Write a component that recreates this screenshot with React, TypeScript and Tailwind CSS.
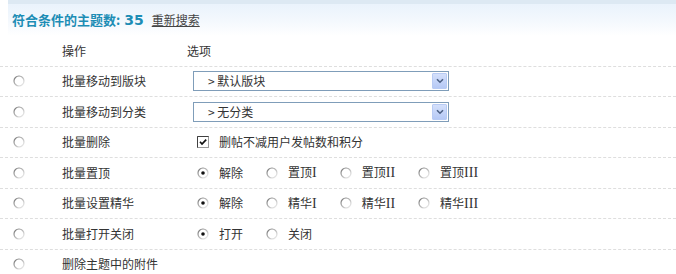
import React from 'react';

// --- small XP-style form widgets ---
const Radio: React.FC<{ checked?: boolean }> = ({ checked }) => (
  <svg width="12" height="12" viewBox="0 0 12 12" className="shrink-0">
    <defs>
      <linearGradient id="rb" x1="0" y1="0" x2="1" y2="1">
        <stop offset="0" stopColor="#707070" />
        <stop offset="0.5" stopColor="#b8b8b8" />
        <stop offset="1" stopColor="#f4f4f4" />
      </linearGradient>
    </defs>
    <circle cx="6" cy="6" r="5" fill="#ffffff" stroke="url(#rb)" strokeWidth="1.2" />
    {checked && <circle cx="6" cy="6" r="1.8" fill="#111111" />}
  </svg>
);

const Checkbox: React.FC = () => (
  <svg width="12" height="12" viewBox="0 0 12 12" className="shrink-0">
    <rect x="0.5" y="0.5" width="11" height="11" fill="#ffffff" stroke="#9a9a9a" />
    <path d="M0.5 11.5 V0.5 H11.5" fill="none" stroke="#404040" />
    <path d="M3 5.8 L5 8 L9.2 3.6" fill="none" stroke="#111111" strokeWidth="1.7" />
  </svg>
);

const FakeSelect: React.FC<{ text: string }> = ({ text }) => (
  <div className="ml-[6px] flex h-[20px] w-[256px] items-center border border-[#7f9db9] bg-white pr-px">
    <span className="flex-1 pl-[14px] text-[12px] text-[#333]">{text}</span>
    <div className="flex h-[16px] w-[15px] items-center justify-center rounded-[1px] border border-[#b8cbf4] bg-gradient-to-b from-[#d4e0fb] to-[#b6c9f5]">
      <svg width="8" height="6" viewBox="0 0 8 6">
        <path d="M1 1.2 L4 4.2 L7 1.2" fill="none" stroke="#4d6185" strokeWidth="1.6" />
      </svg>
    </div>
  </div>
);

// serif roman numerals, like the original page font
const Num: React.FC<{ n: string }> = ({ n }) => <span className="font-['Liberation_Serif',serif] text-[14px]">{n}</span>;

const RadioGroup: React.FC<{ items: React.ReactNode[] }> = ({ items }) => (
  <div className="ml-[10px] flex items-center">
    {items.map((it, i) => (
      <label key={i} className="mr-[23px] flex items-center">
        <Radio checked={i === 0} />
        <span className="ml-[10px] text-[12px] text-[#333]">{it}</span>
      </label>
    ))}
  </div>
);

const rows: { label: string; option: React.ReactNode }[] = [
  { label: '批量移动到版块', option: <FakeSelect text="> 默认版块" /> },
  { label: '批量移动到分类', option: <FakeSelect text="> 无分类" /> },
  {
    label: '批量删除',
    option: (
      <div className="ml-[10px] flex items-center">
        <Checkbox />
        <span className="ml-[10px] text-[12px] text-[#333]">删帖不减用户发帖数和积分</span>
      </div>
    ),
  },
  {
    label: '批量置顶',
    option: <RadioGroup items={['解除', <>置顶<Num n="I" /></>, <>置顶<Num n="II" /></>, <>置顶<Num n="III" /></>]} />,
  },
  {
    label: '批量设置精华',
    option: <RadioGroup items={['解除', <>精华<Num n="I" /></>, <>精华<Num n="II" /></>, <>精华<Num n="III" /></>]} />,
  },
  { label: '批量打开关闭', option: <RadioGroup items={['打开', '关闭']} /> },
  { label: '删除主题中的附件', option: null },
];

const App: React.FC = () => {
  return (
    <div className="h-[274px] w-[676px] overflow-hidden bg-white font-['Noto_Sans_CJK_SC',sans-serif] text-[12px] text-[#333]">
      {/* result header */}
      <div className="ml-[8px] border-t-[4px] border-[#dde9f3] bg-gradient-to-b from-[#eaf3fc] via-[#f3f8fd] to-[#ffffff]">
        <div className="flex h-[32px] items-center pl-[4px]">
          <span className="text-[13px] font-bold text-[#1d8db5]">符合条件的主题数:</span>
          <span className="ml-[4px] font-['DejaVu_Sans',sans-serif] text-[14px] font-bold text-[#1d8db5]">35</span>
          <a className="ml-[8px] text-[12px] text-[#444] underline">重新搜索</a>
        </div>
      </div>

      {/* column heads */}
      <div className="flex h-[30.5px] items-center border-b border-dashed border-[#dedede]">
        <div className="w-[62px]" />
        <div className="w-[125px]">操作</div>
        <div>选项</div>
      </div>

      {rows.map((r) => (
        <div key={r.label} className="flex h-[30.5px] items-center border-b border-dashed border-[#dedede]">
          <div className="w-[62px] pl-[13px]">
            <Radio />
          </div>
          <div className="w-[125px]">{r.label}</div>
          <div className="flex items-center">{r.option}</div>
        </div>
      ))}
    </div>
  );
};

export default App;
